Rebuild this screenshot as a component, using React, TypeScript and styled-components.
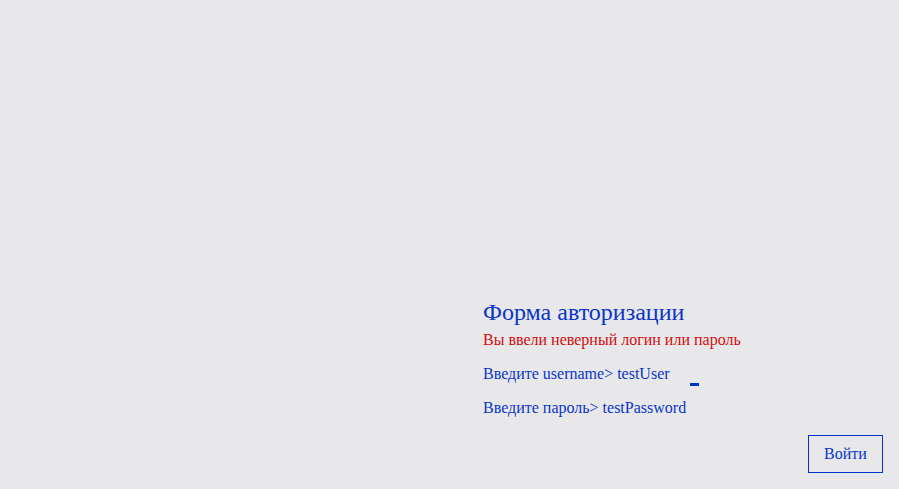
import { createGlobalStyle, styled } from "styled-components";

const GlobalStyle = createGlobalStyle`
  html, body {
    margin: 0;
    padding: 0;
    background: #e8e8ea;
  }
  body {
    font-family: "Liberation Serif", "Times New Roman", serif;
  }
`;

const Page = styled.div`
  min-height: 100vh;
  box-sizing: border-box;
  padding: 16px;
  display: flex;
  flex-direction: column;
  justify-content: flex-end;
`;

const Form = styled.form`
  margin-left: 467px;
  display: flex;
  flex-direction: column;
`;

const Title = styled.h1`
  margin: 0;
  font-size: 24px;
  line-height: 28px;
  font-weight: normal;
  color: #0a35c8;
`;

const Error = styled.div`
  margin-top: 5px;
  font-size: 16px;
  line-height: 18px;
  color: #d20d0d;
`;

const Prompt = styled.div`
  margin-top: 16px;
  font-size: 16px;
  line-height: 18px;
  color: #0a35c8;
  white-space: pre;
`;

const Cursor = styled.span`
  display: inline-block;
  width: 9px;
  height: 3px;
  margin-left: 20px;
  vertical-align: -4px;
  transform: translateY(3px);
  background: #0033cc;
`;

const Actions = styled.div`
  display: flex;
  justify-content: flex-end;
  margin-top: 18px;
`;

const Button = styled.button`
  width: 75px;
  height: 38px;
  padding: 0;
  background: transparent;
  border: 1px solid #0033cc;
  border-radius: 0;
  font-family: "Liberation Serif", "Times New Roman", serif;
  font-size: 16px;
  color: #0a35c8;
  cursor: pointer;
`;

export default function App() {
  return (
    <>
      <GlobalStyle />
      <Page>
        <Form onSubmit={(e) => e.preventDefault()}>
          <Title>Форма авторизации</Title>
          <Error>Вы ввели неверный логин или пароль</Error>
          <Prompt>
            Введите username&gt; testUser
            <Cursor />
          </Prompt>
          <Prompt>Введите пароль&gt; testPassword</Prompt>
        </Form>
        <Actions>
          <Button type="button">Войти</Button>
        </Actions>
      </Page>
    </>
  );
}
